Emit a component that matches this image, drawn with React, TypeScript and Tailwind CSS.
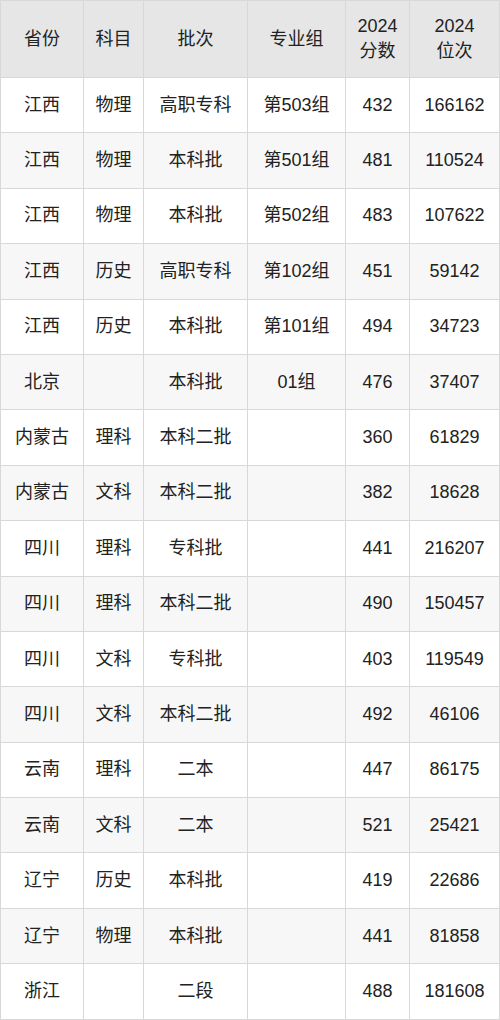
const rows: string[][] = [
  ["江西", "物理", "高职专科", "第503组", "432", "166162"],
  ["江西", "物理", "本科批", "第501组", "481", "110524"],
  ["江西", "物理", "本科批", "第502组", "483", "107622"],
  ["江西", "历史", "高职专科", "第102组", "451", "59142"],
  ["江西", "历史", "本科批", "第101组", "494", "34723"],
  ["北京", "", "本科批", "01组", "476", "37407"],
  ["内蒙古", "理科", "本科二批", "", "360", "61829"],
  ["内蒙古", "文科", "本科二批", "", "382", "18628"],
  ["四川", "理科", "专科批", "", "441", "216207"],
  ["四川", "理科", "本科二批", "", "490", "150457"],
  ["四川", "文科", "专科批", "", "403", "119549"],
  ["四川", "文科", "本科二批", "", "492", "46106"],
  ["云南", "理科", "二本", "", "447", "86175"],
  ["云南", "文科", "二本", "", "521", "25421"],
  ["辽宁", "历史", "本科批", "", "419", "22686"],
  ["辽宁", "物理", "本科批", "", "441", "81858"],
  ["浙江", "", "二段", "", "488", "181608"],
];

const widths = ["w-[83px]", "w-[60px]", "w-[104px]", "w-[98px]", "w-[64px]", "w-[90px]"];

export default function App() {
  return (
    <div
      className="w-[500px] bg-white text-[#222] text-[18px]"
      style={{ fontFamily: '"Liberation Sans", "Noto Sans CJK SC", sans-serif' }}
    >
      <table className="border-collapse table-fixed w-[499px]">
        <thead>
          <tr className="h-[77px] bg-[#e6e6e6]">
            {["省份", "科目", "批次", "专业组"].map((h, i) => (
              <th key={h} className={`${widths[i]} border border-[#d8d8d8] font-normal text-center`}>
                {h}
              </th>
            ))}
            <th className={`${widths[4]} border border-[#d8d8d8] font-normal text-center leading-[25px]`}>
              2024
              <br />
              分数
            </th>
            <th className={`${widths[5]} border border-[#d8d8d8] font-normal text-center leading-[25px]`}>
              2024
              <br />
              位次
            </th>
          </tr>
        </thead>
        <tbody>
          {rows.map((r, i) => (
            <tr key={i} className={`h-[55.4px] ${i % 2 === 1 ? "bg-[#f7f7f7]" : "bg-white"}`}>
              {r.map((c, j) => (
                <td key={j} className="border border-[#d8d8d8] text-center">
                  {c}
                </td>
              ))}
            </tr>
          ))}
        </tbody>
      </table>
    </div>
  );
}
